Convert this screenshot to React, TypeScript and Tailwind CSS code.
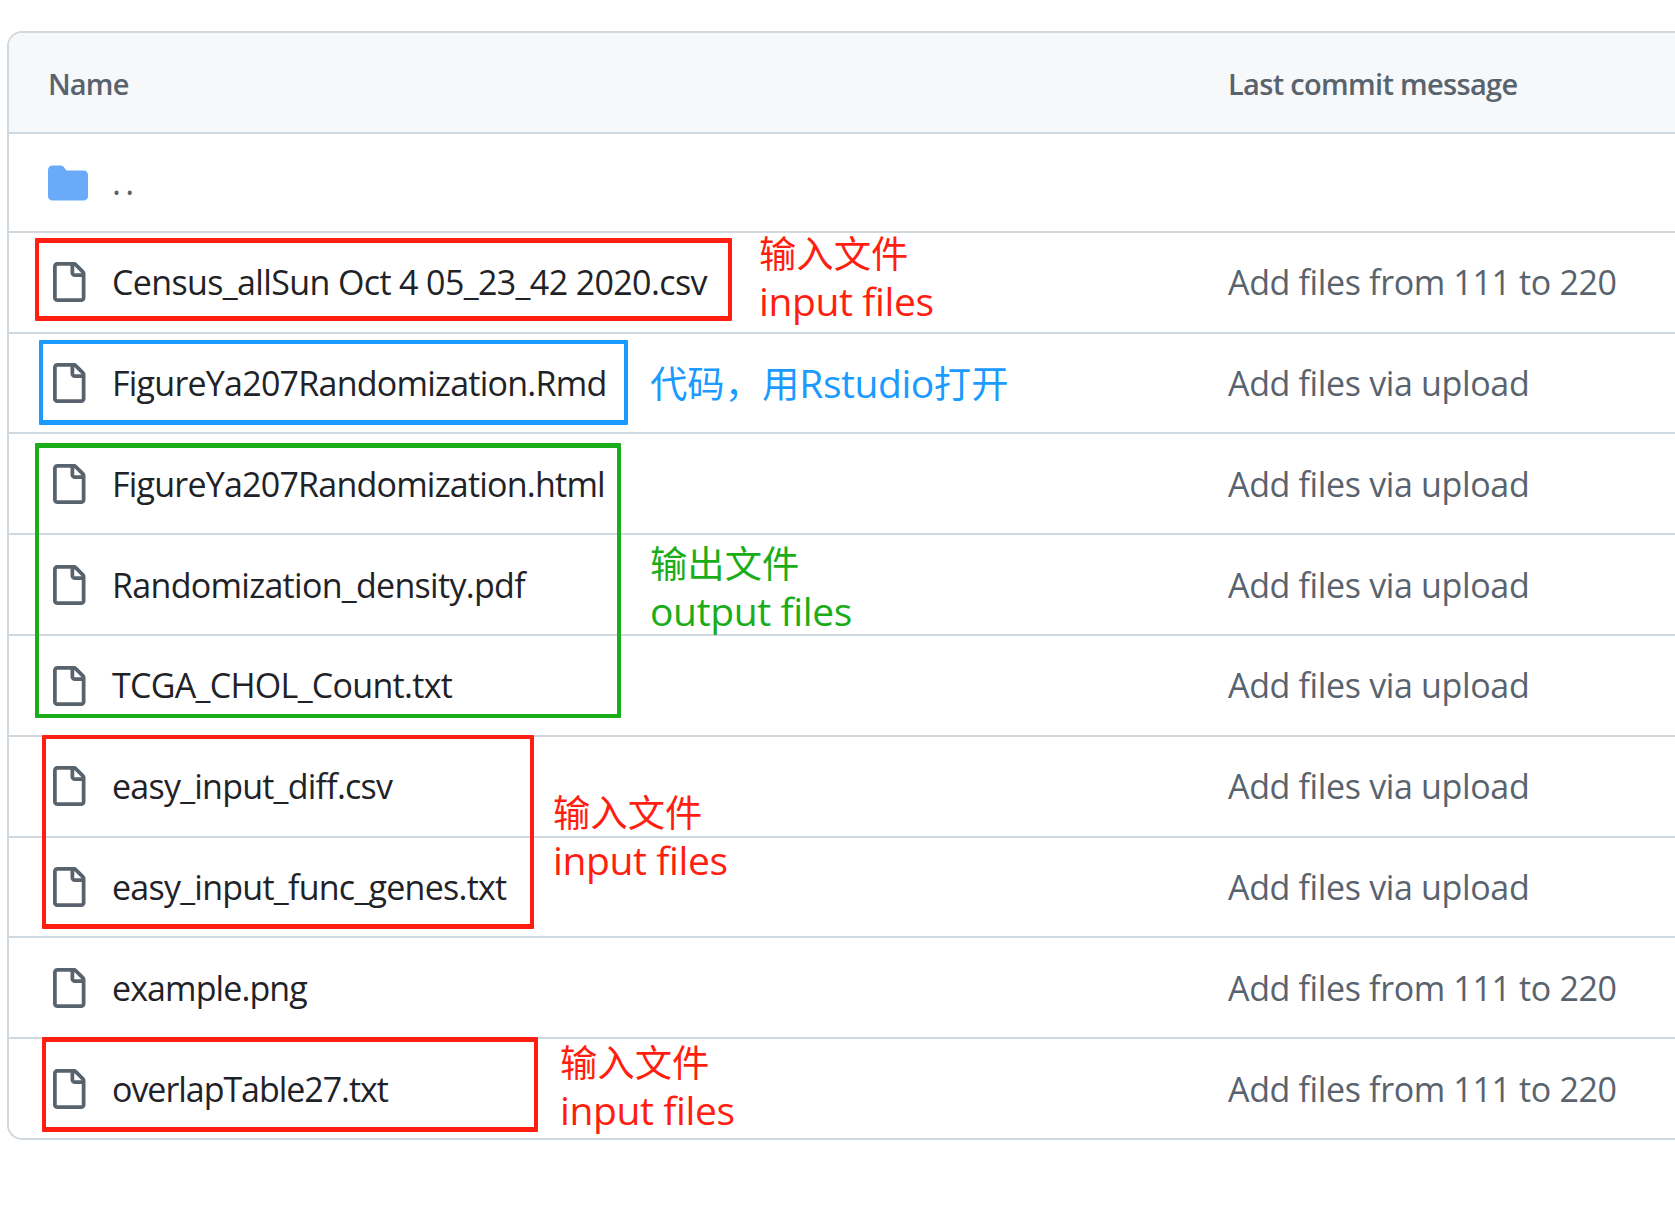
import React from "react";

type FileRow = {
  name: string;
  message: string;
  row: string;
  text: string;
  tracking: string;
};

const UPLOAD = "Add files via upload";
const RANGE = "Add files from 111 to 220";

const files: FileRow[] = [
  { name: "Census_allSun Oct 4 05_23_42 2020.csv", message: RANGE, row: "h-[101px] pb-px", text: "", tracking: "tracking-[-0.63px]" },
  { name: "FigureYa207Randomization.Rmd", message: UPLOAD, row: "h-[100px]", text: "", tracking: "tracking-[-0.76px]" },
  { name: "FigureYa207Randomization.html", message: UPLOAD, row: "h-[101px]", text: "pt-0.5", tracking: "tracking-[-0.78px]" },
  { name: "Randomization_density.pdf", message: UPLOAD, row: "h-[101px]", text: "pt-0.5", tracking: "tracking-[-0.7px]" },
  { name: "TCGA_CHOL_Count.txt", message: UPLOAD, row: "h-[101px]", text: "", tracking: "tracking-[-0.7px]" },
  { name: "easy_input_diff.csv", message: UPLOAD, row: "h-[101px] pb-px", text: "", tracking: "tracking-[-0.77px]" },
  { name: "easy_input_func_genes.txt", message: UPLOAD, row: "h-[100px]", text: "", tracking: "tracking-[-0.75px]" },
  { name: "example.png", message: RANGE, row: "h-[101px]", text: "pt-0.5", tracking: "tracking-[-0.9px]" },
  { name: "overlapTable27.txt", message: RANGE, row: "h-[101px]", text: "pt-0.5", tracking: "tracking-[-1.04px]" },
];

function FileIcon() {
  return (
    <svg className="size-10 shrink-0 fill-[#59636e]" viewBox="0 0 16 16" aria-hidden="true">
      <path d="M2 1.75C2 .784 2.784 0 3.75 0h6.586c.464 0 .909.184 1.237.513l2.914 2.914c.329.328.513.773.513 1.237v9.586A1.75 1.75 0 0 1 13.25 16h-9.5A1.75 1.75 0 0 1 2 14.25Zm1.75-.25a.25.25 0 0 0-.25.25v12.5c0 .138.112.25.25.25h9.5a.25.25 0 0 0 .25-.25V6h-2.75A1.75 1.75 0 0 1 9 4.25V1.5Zm6.75.062V4.25c0 .138.112.25.25.25h2.688l-.011-.013-2.914-2.914-.013-.011Z" />
    </svg>
  );
}

function FolderIcon() {
  return (
    <svg className="size-10 shrink-0 fill-[#6aabf9]" viewBox="0 0 16 16" aria-hidden="true">
      <path d="M0 2.75A1.75 1.75 0 0 1 1.75 1H5c.55 0 1.07.26 1.4.7l.9 1.2a.25.25 0 0 0 .2.1h6.75c.966 0 1.75.784 1.75 1.75v8.5A1.75 1.75 0 0 1 14.25 15H1.75A1.75 1.75 0 0 1 0 13.25Z" />
    </svg>
  );
}

function Frame({ className }: { className: string }) {
  return <div className={`absolute rounded-[1px] ${className}`} />;
}

function Note({ zh, en, className }: { zh: string; en: string; className: string }) {
  return (
    <div className={`absolute flex flex-col whitespace-nowrap ${className}`}>
      <span className="h-12 font-['Noto_Sans_CJK_SC',sans-serif] text-[37.33px] leading-[47px]">{zh}</span>
      <span className="h-12 text-[39px] leading-[48px] tracking-[-0.37px]">{en}</span>
    </div>
  );
}

export default function App() {
  return (
    <div className="relative h-[1208px] w-full overflow-hidden bg-white pt-[31px] pl-[7px] font-['Open_Sans',sans-serif]">
      <div className="overflow-hidden rounded-l-[15px] border-2 border-r-0 border-[#d1d9e0]">
        <div className="flex h-[99px] items-center bg-[#f6f8fa] pt-0.5 pl-[39px] text-[29px] font-semibold text-[#59636e]">
          <div className="w-[1180px] shrink-0 tracking-[-0.85px]">Name</div>
          <div className="tracking-[-0.68px]">Last commit message</div>
        </div>
        <div className="flex h-[99px] items-center gap-6 border-t-2 border-[#d1d9e0] pl-[39px]">
          <FolderIcon />
          <span className="text-[34px] tracking-[4.2px] text-[#59636e]">..</span>
        </div>
        {files.map((file) => (
          <div key={file.name} className={`flex items-center border-t-2 border-[#d1d9e0] pl-[39px] text-[34px] whitespace-nowrap ${file.row}`}>
            <div className="flex w-[1180px] shrink-0 items-center gap-6">
              <FileIcon />
              <span className={`text-[#1f2328] ${file.text} ${file.tracking}`}>{file.name}</span>
            </div>
            <span className={`text-[#59636e] ${file.text} ${file.message === RANGE ? "tracking-[-0.36px]" : "tracking-[-0.35px]"}`}>
              {file.message}
            </span>
          </div>
        ))}
      </div>

      <Frame className="top-[238px] left-[35px] h-[83px] w-[697px] border-x-4 border-y-5 border-[#ff1e10]" />
      <Frame className="top-[340px] left-[39px] h-[85px] w-[589px] border-4 border-b-5 border-[#1b9aff]" />
      <Frame className="top-[443px] left-[35px] h-[275px] w-[586px] border-4 border-t-5 border-[#1aad19]" />
      <Frame className="top-[735px] left-[42px] h-[194px] w-[492px] border-4 border-b-5 border-[#ff1e10]" />
      <Frame className="top-[1037px] left-[42px] h-[95px] w-[496px] border-x-4 border-y-5 border-[#ff1e10]" />

      <Note zh="输入文件" en="input files" className="top-[229px] left-[759px] text-[#ff1e10]" />
      <div className="absolute top-[358px] left-[650px] text-[39px] leading-[48px] whitespace-nowrap text-[#1b9aff]">
        <span className="font-['Noto_Sans_CJK_SC',sans-serif] text-[37.33px]">代码，用</span>
        <span className="tracking-[-0.45px]">Rstudio</span>
        <span className="font-['Noto_Sans_CJK_SC',sans-serif] text-[37.33px]">打开</span>
      </div>
      <Note zh="输出文件" en="output files" className="top-[539px] left-[650px] text-[#1aad19]" />
      <Note zh="输入文件" en="input files" className="top-[788px] left-[553px] text-[#ff1e10]" />
      <Note zh="输入文件" en="input files" className="top-[1038px] left-[560px] text-[#ff1e10]" />
    </div>
  );
}
